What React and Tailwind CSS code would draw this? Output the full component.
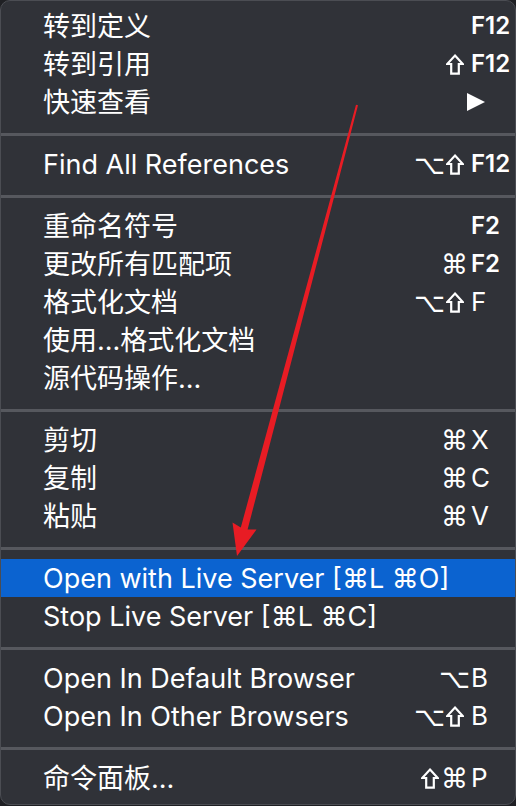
const groups = [
  [
    { label: "转到定义", key: "F12", bold: true },
    { label: "转到引用", mods: ["⇧"], key: "F12", bold: true },
    { label: "快速查看", arrow: true },
  ],
  [{ label: "Find All References", mods: ["⌥", "⇧"], key: "F12", bold: true }],
  [
    { label: "重命名符号", key: "F2", bold: true },
    { label: "更改所有匹配项", mods: ["⌘"], key: "F2", bold: true },
    { label: "格式化文档", mods: ["⌥", "⇧"], key: "F" },
    { label: "使用...格式化文档" },
    { label: "源代码操作..." },
  ],
  [
    { label: "剪切", mods: ["⌘"], key: "X" },
    { label: "复制", mods: ["⌘"], key: "C" },
    { label: "粘贴", mods: ["⌘"], key: "V" },
  ],
  [
    { label: "Open with Live Server [⌘L ⌘O]", active: true },
    { label: "Stop Live Server [⌘L ⌘C]" },
  ],
  [
    { label: "Open In Default Browser", mods: ["⌥"], key: "B" },
    { label: "Open In Other Browsers", mods: ["⌥", "⇧"], key: "B" },
  ],
  [{ label: "命令面板...", mods: ["⇧", "⌘"], key: "P" }],
];

const font = {
  fontFamily: '"Inter", "Noto Sans CJK SC", "DejaVu Sans", sans-serif',
};

function Shift() {
  return (
    <svg width="18" height="21" viewBox="0 0 18 21">
      <path
        d="M9 1.6 L16.8 10 H12.8 V19.6 H5.2 V10 H1.2 Z"
        fill="none"
        stroke="#fff"
        strokeWidth="2.2"
        strokeLinejoin="miter"
      />
    </svg>
  );
}

function Mod({ m }) {
  return (
    <span
      className="flex w-[25px] justify-center text-[27px] leading-none"
      style={{ fontFamily: '"DejaVu Sans", sans-serif' }}
    >
      {m === "⇧" ? <Shift /> : m}
    </span>
  );
}

function Row({ item }) {
  return (
    <div
      className={
        "flex h-[38px] items-center pl-[42px] pr-[6px] text-[27px] text-white " +
        (item.active ? "bg-[#0b63d0]" : "")
      }
    >
      <span className="flex-1 whitespace-nowrap leading-none">{item.label}</span>
      <div className="flex items-center">
        {(item.mods || []).map((m, i) => (
          <Mod key={i} m={m} />
        ))}
        <span
          className={
            "ml-[4px] w-[38px] text-left leading-none " +
            (item.bold ? "text-[24px] font-semibold" : "text-[26px]")
          }
        >
          {item.arrow ? (
            <svg width="18" height="18" viewBox="0 0 18 18" className="ml-[-4px]">
              <polygon points="0,0 18,9 0,18" fill="#fff" />
            </svg>
          ) : (
            item.key
          )}
        </span>
      </div>
    </div>
  );
}

export default function App() {
  return (
    <div className="h-[806px] w-[516px] bg-[#1f2024]" style={font}>
      <div className="relative h-[805px] w-full overflow-hidden rounded-[10px] border border-[#4b4d53] bg-[#303238] py-[6px]">
        {groups.map((g, gi) => (
          <div key={gi}>
            {gi > 0 && (
              <div className="pt-[12px] pb-[9px]">
                <div className="h-[3px] bg-[#56585e]" />
              </div>
            )}
            {g.map((item, ii) => (
              <Row key={ii} item={item} />
            ))}
          </div>
        ))}

        <svg
          className="pointer-events-none absolute left-[-1px] top-[-1px]"
          width="516"
          height="806"
          viewBox="0 0 516 806"
        >
          <polygon
            points="356,104.7 358,105.3 247.6,529.5 256.5,529.5 237,556 232.5,522.5 240.8,527.5"
            fill="#e81c24"
          />
        </svg>
      </div>
    </div>
  );
}
